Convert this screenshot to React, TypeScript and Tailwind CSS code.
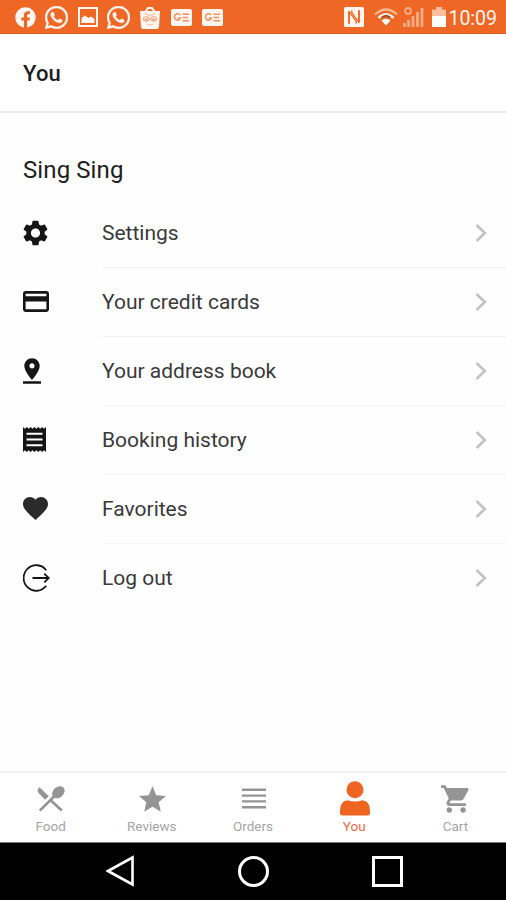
import type { ReactNode } from "react";
import {
    MdCreditCard,
    MdFavorite,
    MdPinDrop,
    MdSettings,
    MdShoppingCart,
    MdStar,
} from "react-icons/md";
import { FaFacebook, FaWhatsapp } from "react-icons/fa";

function ReceiptIcon() {
    return (
        <svg width="23" height="25" viewBox="0 0 23 25" fill="none">
            <path
                d="M0 0L1.9 1.8L3.8 0L5.7 1.8L7.6 0L9.5 1.8L11.5 0L13.4 1.8L15.3 0L17.2 1.8L19.1 0L21 1.8L23 0V25L21 23.2L19.1 25L17.2 23.2L15.3 25L13.4 23.2L11.5 25L9.5 23.2L7.6 25L5.7 23.2L3.8 25L1.9 23.2L0 25Z"
                fill="currentColor"
            />
            <path d="M3.5 6.8H19.5M3.5 12.5H19.5M3.5 18.2H19.5" stroke="white" strokeWidth="2.1" />
        </svg>
    );
}

function LogoutIcon() {
    return (
        <svg width="27" height="28" viewBox="0 0 27 28" fill="none" stroke="currentColor" strokeWidth="1.8">
            <path d="M23.2 6.2A12.6 12.8 0 1 0 23.2 21.8" />
            <path d="M9.5 14H25.5M21.3 9.7L25.8 14L21.3 18.3" />
        </svg>
    );
}

function PictureIcon() {
    return (
        <svg width="20" height="20" viewBox="0 0 20 20" fill="none" stroke="currentColor" strokeWidth="2">
            <path d="M1 1H19V19H1Z" />
            <path d="M3.5 16V11L7 8.5L10.5 11L13 9.5L16.5 12V16Z" fill="currentColor" stroke="none" />
        </svg>
    );
}

function BagIcon() {
    return (
        <svg width="20" height="23" viewBox="0 0 21 23" preserveAspectRatio="none" fill="none">
            <path d="M6 6V5L8.5 2H12.5L15 5V6" stroke="currentColor" strokeWidth="2" />
            <path d="M0 5H21L20 20.5Q20 23 17.5 23H3.5Q1 23 1 20.5Z" fill="currentColor" />
            <path d="M5 7.5Q10.5 11 16 7.5M7 18Q10.5 20 14 18" stroke="#f8bfa3" strokeWidth="1.2" />
            <ellipse cx="6.7" cy="13" rx="3" ry="2.2" stroke="#f6a27a" strokeWidth="1.1" />
            <ellipse cx="14.3" cy="13" rx="3" ry="2.2" stroke="#f6a27a" strokeWidth="1.1" />
            <path d="M5.5 13.5H8M13 13.5H15.5" stroke="#d98263" strokeWidth="1.6" />
        </svg>
    );
}

function NewsIcon() {
    return (
        <svg width="21" height="17" viewBox="0 0 21 17" fill="none">
            <rect width="21" height="17" rx="2" fill="currentColor" />
            <path d="M9 6.2A3 3.2 0 1 0 9.3 9H6.8M11.5 5.2H18M11.5 8.5H17M11.5 11.8H18" stroke="#f0915f" strokeWidth="1.5" />
        </svg>
    );
}

function NfcIcon() {
    return (
        <svg width="20" height="20" viewBox="0 0 20 20" fill="none">
            <rect width="20" height="20" rx="1.5" fill="currentColor" />
            <path d="M5 16.8V4.3M15 3.2V15.7" stroke="#ef6724" strokeWidth="1.9" />
            <path d="M5 4.3L12.2 14.5V16.8M15 15.7L7.8 5.5V3.2" stroke="#ef6724" strokeWidth="1.3" />
        </svg>
    );
}

function WifiIcon() {
    return (
        <svg width="24" height="18" viewBox="0 0 24 18" fill="none">
            <path d="M1 6.5Q12 -3.5 23 6.5" stroke="#f8b794" strokeWidth="2.2" />
            <path d="M4.5 10Q12 3 19.5 10" stroke="#ffe9df" strokeWidth="2.8" />
            <path d="M7.5 9.5Q12 6 16.5 9.5" stroke="#8d3a22" strokeWidth="1.3" />
            <path d="M7.5 12.5Q12 9 16.5 12.5L12 17.5Z" fill="white" />
        </svg>
    );
}

function SignalIcon() {
    return (
        <svg width="21" height="20" viewBox="0 0 21 20" fill="none" stroke="#f8ad88">
            <circle cx="5" cy="4" r="3" strokeWidth="1.8" />
            <path d="M1.5 20V16M5.5 20V13M10 20V9M14.5 20V5M19 20V1" strokeWidth="2.8" />
        </svg>
    );
}

function BatteryIcon() {
    return (
        <svg width="14" height="20" viewBox="0 0 14 20">
            <path d="M4 0H10V2.5H14V9H0V2.5H4Z" fill="#fbbf9f" />
            <path d="M0 9H14V20H0Z" fill="white" />
        </svg>
    );
}

function CutleryIcon() {
    return (
        <svg width="28" height="26" viewBox="0 0 28 26" fill="none">
            <path d="M2.5 1.2Q-.8 4 1.6 7L8 13.8L11.8 10.2Z" fill="currentColor" />
            <ellipse cx="21.4" cy="6.3" rx="6.9" ry="5.3" transform="rotate(-42 21.4 6.3)" fill="currentColor" />
            <path d="M17.5 10L2.8 24.6M12.8 13.4L24.8 24.6" stroke="currentColor" strokeWidth="2.7" />
        </svg>
    );
}

function PersonIcon() {
    return (
        <svg width="30" height="35" viewBox="0 0 30 35" fill="currentColor">
            <circle cx="15" cy="8.7" r="8.5" />
            <path d="M7.5 19.2Q15 21.8 22.5 19.2Q30 20 30 29.5V32Q30 34.5 27.5 34.5H2.5Q0 34.5 0 32V29.5Q0 20 7.5 19.2Z" />
        </svg>
    );
}

function ListIcon() {
    return (
        <svg width="24" height="21" viewBox="0 0 24 21" stroke="currentColor" strokeWidth="2.4">
            <path d="M0 1.8H24M0 7.6H24M0 13.4H24M0 19.2H24" />
        </svg>
    );
}

const menu: { label: string; icon: ReactNode }[] = [
    { label: "Settings", icon: <MdSettings viewBox="2.2 2 19.6 20" className="h-[26px] w-[25px]" /> },
    { label: "Your credit cards", icon: <MdCreditCard viewBox="2 4 20 16" className="h-[21px] w-[26px]" /> },
    { label: "Your address book", icon: <MdPinDrop viewBox="5 2 14 20" className="h-[26px] w-[18px]" /> },
    { label: "Booking history", icon: <ReceiptIcon /> },
    { label: "Favorites", icon: <MdFavorite viewBox="2 3 20 18.35" className="h-[23px] w-[25px] text-[#2b2b2b]" /> },
    { label: "Log out", icon: <LogoutIcon /> },
];

const tabs: { label: string; icon: ReactNode; active?: boolean }[] = [
    { label: "Food", icon: <CutleryIcon /> },
    { label: "Reviews", icon: <MdStar viewBox="2 2 20 19" className="h-[26px] w-[27px]" /> },
    { label: "Orders", icon: <ListIcon /> },
    { label: "You", icon: <PersonIcon />, active: true },
    { label: "Cart", icon: <MdShoppingCart viewBox="1 2 21 20" className="h-[28px] w-[29px]" /> },
];

function StatusBar() {
    return (
        <div className="flex h-[34px] items-center justify-between border-b border-[#dc5c1d] bg-[#ef6724] pl-[15px] pr-[9px] pt-px text-[#fff6f1]">
            <div className="flex items-center">
                <FaFacebook className="h-[21px] w-[21px]" />
                <FaWhatsapp viewBox="0 32 448 448" stroke="currentColor" strokeWidth="8" className="ml-[9px] h-[23px] w-[23px]" />
                <span className="ml-[10px]"><PictureIcon /></span>
                <FaWhatsapp viewBox="0 32 448 448" stroke="currentColor" strokeWidth="8" className="ml-[9px] h-[23px] w-[23px]" />
                <span className="ml-[10px]"><BagIcon /></span>
                <span className="ml-[11px]"><NewsIcon /></span>
                <span className="ml-[10px]"><NewsIcon /></span>
            </div>
            <div className="flex items-center">
                <NfcIcon />
                <span className="ml-[10px]"><WifiIcon /></span>
                <span className="ml-[5px]"><SignalIcon /></span>
                <span className="ml-[8px]"><BatteryIcon /></span>
                <span className="ml-[2px] mt-[3px] text-[19.5px] leading-none">10:09</span>
            </div>
        </div>
    );
}

export default function App() {
    return (
        <div className="flex h-[900px] w-[506px] flex-col overflow-hidden bg-white font-['Roboto',sans-serif]">
            <StatusBar />

            <header className="flex h-[79px] items-center border-b-2 border-[#ececec] pl-[23px] pt-px">
                <h1 className="text-[22px] font-medium tracking-[0.2px] text-[#1d1d1d]">You</h1>
            </header>

            <main className="flex-1 bg-[#fefefe]">
                <div className="flex h-[86px] items-end pb-[13px] pl-[23px]">
                    <h2 className="text-[24px] leading-[32px] tracking-[0.1px] text-[#202020]">Sing Sing</h2>
                </div>
                {menu.map((item) => (
                    <div key={item.label} className="group flex h-[69px] items-center pl-[23px]">
                        <div className="w-[79px] pb-[2px] text-[#151515]">{item.icon}</div>
                        <div className="flex h-full flex-1 items-center justify-between border-b border-[#f3f3f3] pr-[19px] group-last:border-transparent group-nth-[6]:border-[#f9f9f9]">
                            <span className="pt-px text-[21px] text-[#3a3a3a]">{item.label}</span>
                            <svg width="12" height="18" viewBox="0 0 12 18" fill="none" stroke="#c2c2c2" strokeWidth="2.6">
                                <path d="M1.5 1L9.8 9L1.5 17" />
                            </svg>
                        </div>
                    </div>
                ))}
            </main>

            <nav className="flex h-[71px] border-t-2 border-[#efefef] bg-white">
                {tabs.map((tab) => (
                    <div
                        key={tab.label}
                        className={`flex flex-1 flex-col items-center ${tab.active ? "text-[#ef6420]" : "text-[#949494]"}`}
                    >
                        <div className="flex h-[45px] items-center pl-px pt-[6px]">{tab.icon}</div>
                        <span className={`text-[13.5px] leading-[16px] ${tab.active ? "text-[#f06a48]" : "text-[#a5a5a5]"}`}>
                            {tab.label}
                        </span>
                    </div>
                ))}
            </nav>

            <div className="flex h-[58px] items-center border-t border-[#777777] bg-black pb-px pl-[106px]">
                <svg width="28" height="32" viewBox="0 0 28 32" fill="none" stroke="white" strokeWidth="2.6">
                    <path d="M2 16L26.5 2.5V29.5Z" />
                </svg>
                <div className="ml-[104px] h-[31px] w-[31px] rounded-full border-3 border-white" />
                <div className="ml-[103px] h-[31px] w-[31px] border-3 border-white" />
            </div>
        </div>
    );
}
